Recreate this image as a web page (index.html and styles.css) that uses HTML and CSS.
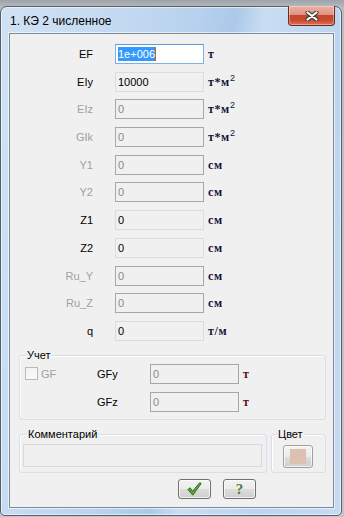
FILE: index.html
```html
<!DOCTYPE html>
<html>
<head>
<meta charset="utf-8">
<link rel="stylesheet" href="styles.css">
</head>
<body>
<div class="window">
  <div class="titlebar">
    <span class="title">1. КЭ 2 численное</span>
    <div class="close">
      <svg width="14" height="10" viewBox="0 0 14 10">
        <path d="M2.5 1.5 L11.5 8.5 M11.5 1.5 L2.5 8.5" stroke="#3a3a3a" stroke-width="4.2" stroke-linecap="round" fill="none"/>
        <path d="M2.5 1.5 L11.5 8.5 M11.5 1.5 L2.5 8.5" stroke="#ffffff" stroke-width="2.2" stroke-linecap="round" fill="none"/>
      </svg>
    </div>
  </div>
  <div class="client">
    <div class="params">
      <span class="lbl">EF</span><div class="field focus"><span class="sel">1e+006</span><span class="caret"></span></div><span class="unit">т</span>
      <span class="lbl">EIy</span><div class="field en">10000</div><span class="unit">т*м<sup>2</sup></span>
      <span class="lbl dis">EIz</span><div class="field dis">0</div><span class="unit">т*м<sup>2</sup></span>
      <span class="lbl dis">GIk</span><div class="field dis">0</div><span class="unit">т*м<sup>2</sup></span>
      <span class="lbl dis">Y1</span><div class="field dis">0</div><span class="unit">см</span>
      <span class="lbl dis">Y2</span><div class="field dis">0</div><span class="unit">см</span>
      <span class="lbl">Z1</span><div class="field en">0</div><span class="unit">см</span>
      <span class="lbl">Z2</span><div class="field en">0</div><span class="unit">см</span>
      <span class="lbl dis">Ru_Y</span><div class="field dis">0</div><span class="unit">см</span>
      <span class="lbl dis">Ru_Z</span><div class="field dis">0</div><span class="unit">см</span>
      <span class="lbl">q</span><div class="field en">0</div><span class="unit">т/м</span>
    </div>

    <div class="group uchet">
      <span class="legend">Учет</span>
      <div class="uchet-grid">
        <div class="chk-cell"><span class="checkbox"></span><span class="chk-lbl">GF</span></div>
        <span class="glbl">GFy</span><div class="field dis">0</div><span class="unit red">т</span>
        <span class="empty"></span>
        <span class="glbl">GFz</span><div class="field dis">0</div><span class="unit red">т</span>
      </div>
    </div>

    <div class="bottom-row">
      <div class="group comment">
        <span class="legend">Комментарий</span>
        <div class="field comment-field"></div>
      </div>
      <div class="group color">
        <span class="legend">Цвет</span>
        <div class="btn color-btn"><span class="swatch"></span></div>
      </div>
    </div>

    <div class="buttons">
      <div class="btn action">
        <svg width="15" height="14" viewBox="0 0 15 14">
          <path d="M0.8 7.6 L3.2 5.8 L5.6 9.2 L12.8 0.6 L14.2 1.6 L5.8 13.2 Z" fill="#5aa53a" stroke="#2e6a1c" stroke-width="0.9" stroke-linejoin="round"/>
        </svg>
      </div>
      <div class="btn action"><span class="q">?</span></div>
    </div>
  </div>
</div>
</body>
</html>
```

FILE: styles.css
```css
* { box-sizing: border-box; }

html, body {
  margin: 0;
  padding: 0;
}

body {
  width: 344px;
  height: 517px;
  overflow: hidden;
  background: linear-gradient(#9ea3a8, #b9bdc1 8px, #c3c6c9);
  font-family: "Liberation Sans", Arial, sans-serif;
  font-size: 11px;
  color: #000;
}

.window {
  margin-top: 6px;
  width: 342px;
  height: 510px;
  border: 1px solid #55606c;
  border-radius: 7px 7px 5px 5px;
  display: flex;
  flex-direction: column;
  background:
    linear-gradient(100deg, rgba(255,255,255,0.35) 0%, rgba(255,255,255,0.15) 30%, rgba(255,255,255,0) 45%, rgba(120,160,210,0.18) 55%, rgba(255,255,255,0.25) 62%, rgba(255,255,255,0.05) 80%, rgba(255,255,255,0.2) 100%),
    #b8d2ee;
  box-shadow: inset 0 0 0 1px rgba(255,255,255,0.55);
}

.titlebar {
  height: 26px;
  display: flex;
  align-items: flex-start;
  flex: none;
}

.title {
  margin-left: 9px;
  padding-top: 7px;
  font-size: 12px;
  line-height: 14px;
  color: #000;
}

.close {
  margin-left: auto;
  margin-right: 6px;
  margin-top: -1px;
  width: 47px;
  height: 20px;
  border: 1px solid #6a2a1e;
  border-top: none;
  border-radius: 0 0 4px 4px;
  background: linear-gradient(#eab2a5 0%, #e09482 45%, #c8452b 50%, #c64a30 75%, #e07255 100%);
  box-shadow: inset 0 0 0 1px rgba(255,255,255,0.35);
  display: flex;
  align-items: center;
  justify-content: center;
}

.close svg { display: block; margin-top: 1px; }

.client {
  flex: 1;
  margin: 0 7px 7px 8px;
  background: #f0f0f0;
  border: 1px solid #7c8a99;
  box-shadow: 0 0 0 1px rgba(255,255,255,0.6);
  display: flex;
  flex-direction: column;
}

/* parameters grid */
.params {
  margin-top: 10px;
  display: grid;
  grid-template-columns: 105px 89px 1fr;
  grid-auto-rows: 20px;
  row-gap: 7.7px;
}

.lbl {
  text-align: right;
  padding-right: 22px;
  line-height: 20px;
  color: #000;
}

.lbl.dis { color: #a0a0a0; }

.field {
  height: 20px;
  border: 1px solid #dcdcdc;
  background: #f0f0f0;
  padding-left: 2px;
  line-height: 18px;
  white-space: nowrap;
  overflow: hidden;
  color: #000;
}

.field.dis {
  border-color: #a7a7a7;
  color: #8a8a8a;
}

.field.focus {
  border-color: #7fb1e3;
  border-top-color: #5f9bd8;
  background: #ffffff;
  display: flex;
  align-items: center;
}

.sel {
  background: #3399ff;
  color: #fff;
  line-height: 14px;
}

.caret {
  width: 1px;
  height: 14px;
  background: #cc6600;
}

.unit {
  padding-left: 4px;
  font-family: "Liberation Serif", "Times New Roman", serif;
  font-weight: bold;
  font-size: 12px;
  letter-spacing: 0.6px;
  line-height: 20px;
  color: #14143a;
}

.unit sup {
  font-family: "Liberation Sans", Arial, sans-serif;
  font-weight: normal;
  font-size: 9px;
  line-height: 0;
  vertical-align: 5px;
}

.unit.red { color: #5a0f1e; }

/* groups */
.group {
  position: relative;
  border: 1px solid #d5dfe5;
  border-radius: 3px;
  box-shadow: inset 1px 1px 0 #ffffff;
}

.legend {
  position: absolute;
  top: -7px;
  padding: 0 1px;
  background: #f0f0f0;
  line-height: 12px;
  color: #000;
}

.uchet {
  margin: 14px 7px 0 9px;
  padding: 8px 0 7px 5px;
}

.uchet .legend { left: 6px; }

.uchet-grid {
  display: grid;
  grid-template-columns: 72px 53px 89px 1fr;
  grid-auto-rows: 20px;
  row-gap: 8px;
}

.chk-cell {
  display: flex;
  align-items: center;
}

.checkbox {
  width: 13px;
  height: 13px;
  border: 1px solid #b9b9b9;
  background: linear-gradient(135deg, #f1f1f1, #fbfbfb);
}

.chk-lbl {
  margin-left: 3px;
  color: #a0a0a0;
}

.glbl {
  line-height: 20px;
  color: #000;
}

.bottom-row {
  display: flex;
  gap: 4px;
  margin: 14px 0 0 9px;
}

.comment {
  width: 248px;
  padding: 9px 4px 5px 3px;
}

.comment .legend { left: 7px; }

.comment-field {
  width: 239px;
  height: 23px;
  border-color: #d9d9d9;
}

.color {
  width: 55px;
  padding: 10px 0 4px 11px;
}

.color .legend { left: 5px; }

.btn {
  border: 1px solid #707070;
  border-radius: 3px;
  background: linear-gradient(#f2f2f2 0%, #ebebeb 50%, #dddddd 50%, #cfcfcf 100%);
  box-shadow: inset 0 0 0 1px rgba(255,255,255,0.7);
}

.color-btn {
  width: 30px;
  height: 23px;
  padding: 3px 0 0 6px;
  border-color: #a0a0a0;
}

.swatch {
  display: block;
  width: 16px;
  height: 15px;
  background: #dcc1b0;
}

.buttons {
  display: flex;
  gap: 12px;
  margin: 6px 0 0 168px;
}

.action {
  width: 33px;
  height: 20px;
  display: flex;
  align-items: center;
  justify-content: center;
}

.action svg { display: block; }

.q {
  font-family: "Liberation Serif", "Times New Roman", serif;
  font-weight: bold;
  font-size: 15px;
  line-height: 16px;
  color: #4d7f2a;
}
```
